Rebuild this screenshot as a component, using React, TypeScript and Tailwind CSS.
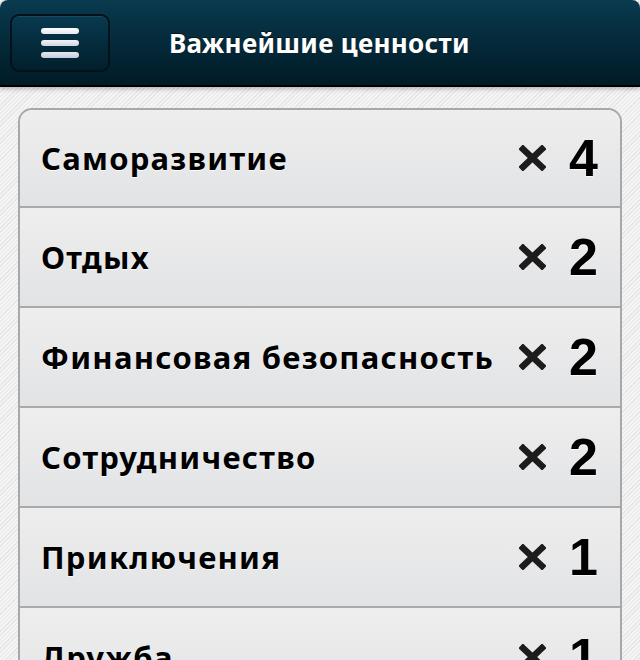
import React from "react";

const items: { name: string; count: number }[] = [
  { name: "Саморазвитие", count: 4 },
  { name: "Отдых", count: 2 },
  { name: "Финансовая безопасность", count: 2 },
  { name: "Сотрудничество", count: 2 },
  { name: "Приключения", count: 1 },
  { name: "Дружба", count: 1 },
];

function Cross() {
  return (
    <svg width="27" height="26" viewBox="0 0 27 26" className="shrink-0">
      <path d="M4 4 L23 22 M23 4 L4 22" stroke="#1c1c1c" strokeWidth="6.5" strokeLinecap="square" />
    </svg>
  );
}

export default function App() {
  return (
    <div
      className="w-[640px] h-[660px] overflow-hidden bg-[repeating-linear-gradient(135deg,#f4f4f4_0px,#f4f4f4_2px,#e6e6e6_2px,#e6e6e6_3px)]"
      style={{ fontFamily: '"Noto Sans", Roboto, sans-serif' }}
    >
      <header className="h-[87px] rounded-t-[8px] border-b-2 border-black bg-gradient-to-b from-[#0a3a4f] to-[#011b26] flex items-center pl-[10px] shadow-[0_2px_4px_rgba(0,0,0,0.25)]">
        <button className="w-[100px] h-[58px] rounded-[9px] border-2 border-[#01121a] bg-gradient-to-b from-[#083a50] to-[#021f2c] flex flex-col items-center justify-center gap-[6px] shadow-[inset_0_1px_0_rgba(255,255,255,0.08)]">
          <span className="block w-[38px] h-[6px] rounded-[3px] bg-gradient-to-b from-white to-[#e4e8f0]" />
          <span className="block w-[38px] h-[6px] rounded-[3px] bg-gradient-to-b from-[#f0f2f7] to-[#d0d6e4]" />
          <span className="block w-[38px] h-[6px] rounded-[3px] bg-gradient-to-b from-[#e4e8f0] to-[#c4cbdc]" />
        </button>
        <h1 className="ml-[59px] text-white font-bold text-[26px] tracking-[0.3px] leading-none [text-shadow:0_-1px_0_rgba(0,0,0,0.5)]">
          Важнейшие ценности
        </h1>
      </header>
      <main className="pt-[21px] px-[18px]">
        <div className="rounded-[14px] border-2 border-[#a8a8a8] overflow-hidden bg-[#e8e8e8]">
          {items.map((it, i) => (
            <div
              key={it.name}
              className={`${i === 0 ? "h-[98px]" : "h-[100px]"} border-b-2 border-[#aaaaaa] bg-gradient-to-b from-[#eeeeee] to-[#e2e3e5] flex items-center pl-[21px] pr-[21px]`}
            >
              <span className="flex-1 text-black font-bold text-[31px] tracking-[1.25px] leading-none [text-shadow:0_1px_0_rgba(255,255,255,0.8)]">
                {it.name}
              </span>
              <Cross />
              <span
                className="ml-[22px] w-[31px] text-black font-bold text-[52px] leading-none text-center [text-shadow:0_1px_0_rgba(255,255,255,0.8)]"
                style={{ fontFamily: '"Liberation Sans", Arial, sans-serif' }}
              >
                {it.count}
              </span>
            </div>
          ))}
        </div>
      </main>
    </div>
  );
}
